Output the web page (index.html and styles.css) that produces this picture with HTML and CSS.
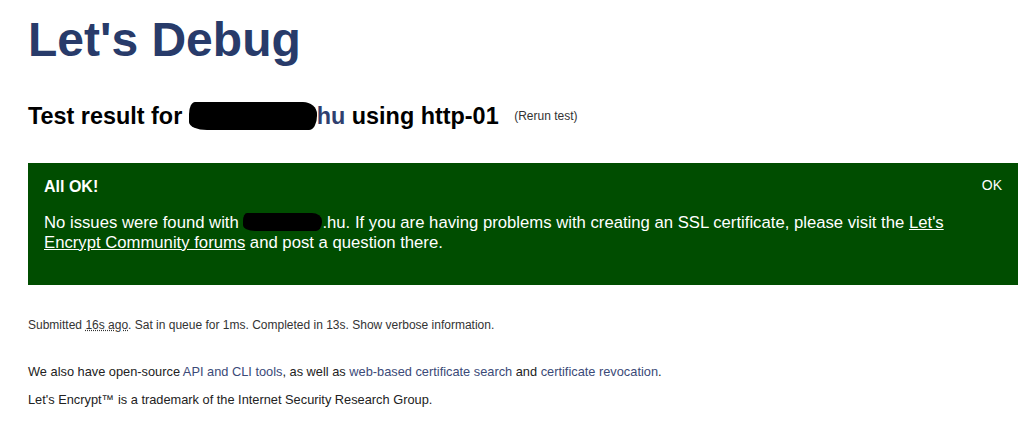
FILE: index.html
```html
<!DOCTYPE html>
<html lang="en">
<head>
  <meta charset="UTF-8" />
  <title>Let's Debug</title>
  <link rel="stylesheet" href="styles.css">
</head>
<body>
  <div class="page">
    <h1 class="title">Let's Debug</h1>

    <h2 class="result-head">
      Test result for <a class="domain" href="#"><span class="redact redact-head"></span>hu</a> using http-01
      <a class="rerun" href="#">(Rerun test)</a>
    </h2>

    <div class="notice">
      <div class="notice-top">
        <span class="notice-title">All OK!</span>
        <span class="notice-code">OK</span>
      </div>
      <p class="notice-text">
        No issues were found with <span class="redact redact-body"></span>.hu. If you are having problems with creating an SSL certificate, please visit the <a href="#">Let's Encrypt Community forums</a> and post a question there.
      </p>
    </div>

    <p class="meta">
      Submitted <abbr title="16 seconds ago">16s ago</abbr>. Sat in queue for 1ms. Completed in 13s. <a href="#">Show verbose information.</a>
    </p>

    <p class="foot">
      We also have open-source <a href="#">API and CLI tools</a>, as well as <a href="#">web-based certificate search</a> and <a href="#">certificate revocation</a>.
    </p>
    <p class="foot">Let's Encrypt&trade; is a trademark of the Internet Security Research Group.</p>
  </div>
</body>
</html>
```

FILE: styles.css
```css
* {
  box-sizing: border-box;
}
body {
  margin: 0;
  font-family: "Liberation Sans", Arial, sans-serif;
  color: #222;
  background: #fff;
}

.page {
  padding: 0 10px 20px 28px;
}

a {
  color: #3b4a78;
  text-decoration: none;
}

.title {
  margin: 0;
  padding-top: 12px;
  font-size: 48px;
  line-height: 56px;
  color: #283b6a;
}

.result-head {
  margin: 33px 0 0;
  font-size: 23.4px;
  line-height: 30px;
  color: #000;
}

.domain {
  color: #2f3f6f;
}

.redact {
  display: inline-block;
  background: #000;
  vertical-align: middle;
}

.redact-head {
  width: 128px;
  height: 28px;
  margin-top: -4px;
  border-radius: 6px 14px 8px 18px / 12px 12px 14px 8px;
}

.redact-body {
  width: 79px;
  height: 18px;
  margin: -3px 0 0;
  border-radius: 4px 10px 6px 12px / 8px 8px 9px 6px;
}

.rerun {
  margin-left: 9px;
  font-size: 12px;
  font-weight: normal;
  color: #333;
  vertical-align: 4px;
}

.notice {
  margin-top: 32px;
  background: #004d00;
  color: #fff;
  padding: 13px 16px 20px;
  min-height: 122px;
}

.notice-top {
  display: flex;
  justify-content: space-between;
  align-items: flex-start;
}

.notice-title {
  font-weight: bold;
  font-size: 16px;
  line-height: 18px;
  padding-top: 2px;
}

.notice-code {
  font-size: 14px;
  line-height: 18px;
}

.notice-text {
  margin: 17px 0 0;
  font-size: 16.7px;
  line-height: 20px;
}

.notice-text a {
  color: #fff;
  text-decoration: underline;
}

.meta {
  margin: 32px 0 0;
  font-size: 12px;
  line-height: 16px;
  color: #333;
}

.meta abbr {
  text-decoration: underline dotted;
}

.meta a {
  color: #333;
}

.foot {
  margin: 31px 0 0;
  font-size: 12.8px;
  line-height: 16px;
  color: #222;
}

.foot + .foot {
  margin-top: 12px;
}
```
